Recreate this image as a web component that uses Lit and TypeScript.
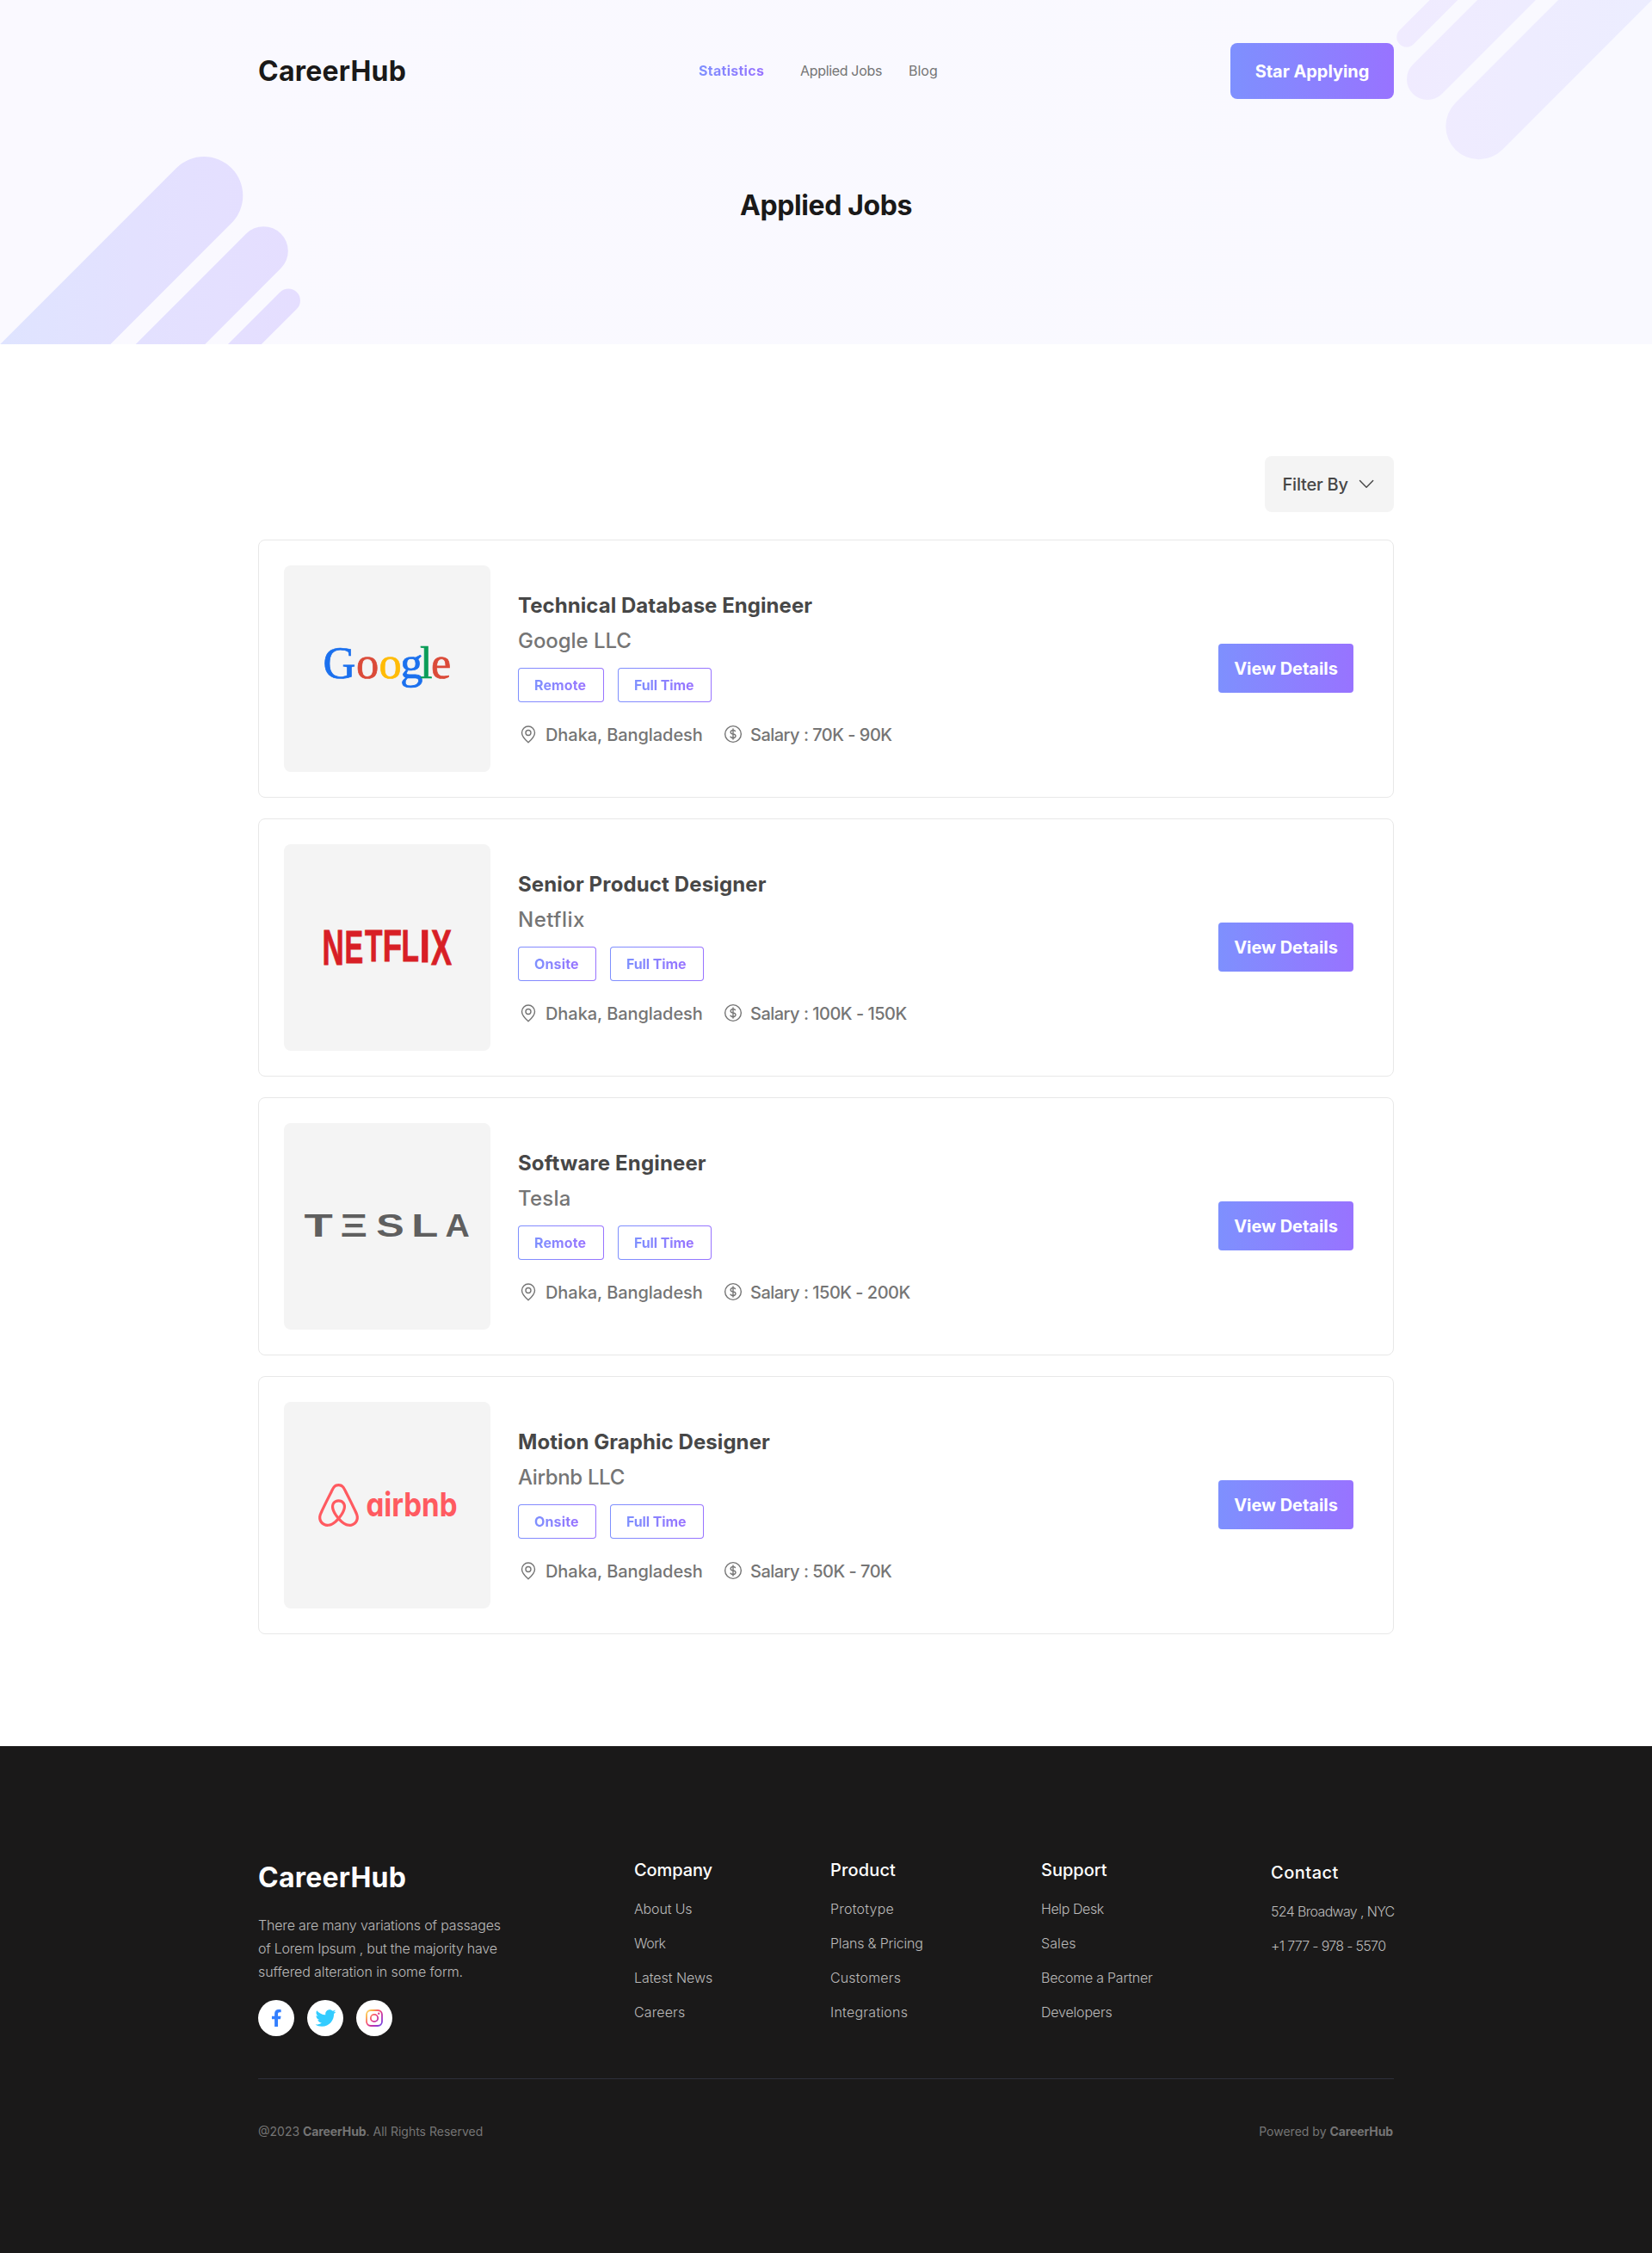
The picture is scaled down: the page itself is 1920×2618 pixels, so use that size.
import { LitElement, html, css, svg } from "lit";
import { customElement, property } from "lit/decorators.js";

interface Tracked {
  text: string;
  ls: number;
}

interface Job {
  title: Tracked;
  company: Tracked;
  place: "Remote" | "Onsite";
  salary: string;
  logo: "google" | "netflix" | "tesla" | "airbnb";
}

const JOBS: Job[] = [
  {
    title: { text: "Technical Database Engineer", ls: 0.05 },
    company: { text: "Google LLC", ls: -0.05 },
    place: "Remote",
    salary: "Salary : 70K - 90K",
    logo: "google",
  },
  {
    title: { text: "Senior Product Designer", ls: 0.14 },
    company: { text: "Netflix", ls: 0.5 },
    place: "Onsite",
    salary: "Salary : 100K - 150K",
    logo: "netflix",
  },
  {
    title: { text: "Software Engineer", ls: 0.15 },
    company: { text: "Tesla", ls: 0.2 },
    place: "Remote",
    salary: "Salary : 150K - 200K",
    logo: "tesla",
  },
  {
    title: { text: "Motion Graphic Designer", ls: 0.07 },
    company: { text: "Airbnb LLC", ls: -0.35 },
    place: "Onsite",
    salary: "Salary : 50K - 70K",
    logo: "airbnb",
  },
];

const COLUMNS: { name: string; heading: Tracked; links: Tracked[] }[] = [
  {
    name: "company",
    heading: { text: "Company", ls: -0.1 },
    links: [
      { text: "About Us", ls: -0.15 },
      { text: "Work", ls: -0.5 },
      { text: "Latest News", ls: -0.04 },
      { text: "Careers", ls: 0.13 },
    ],
  },
  {
    name: "product",
    heading: { text: "Product", ls: 0.15 },
    links: [
      { text: "Prototype", ls: 0.22 },
      { text: "Plans & Pricing", ls: -0.2 },
      { text: "Customers", ls: 0.15 },
      { text: "Integrations", ls: 0.24 },
    ],
  },
  {
    name: "support",
    heading: { text: "Support", ls: 0 },
    links: [
      { text: "Help Desk", ls: -0.4 },
      { text: "Sales", ls: 0.1 },
      { text: "Become a Partner", ls: -0.23 },
      { text: "Developers", ls: -0.19 },
    ],
  },
  {
    name: "contact",
    heading: { text: "Contact", ls: 0.5 },
    links: [
      { text: "524 Broadway , NYC", ls: -0.66 },
      { text: "+1 777 - 978 - 5570", ls: -0.7 },
    ],
  },
];

const spaced = (t: Tracked) => html`<span style="letter-spacing:${t.ls}px">${t.text}</span>`;

/* Brand marks, each on the 240 x 240 tile of a job card. */

const googleLetters: [string, number, string][] = [
  ["G", 45.6, "#1b70ee"],
  ["o", 84, "#db4a38"],
  ["o", 110.6, "#ffbb06"],
  ["g", 135.2, "#1b70ee"],
  ["l", 158, "#0b9d58"],
  ["e", 171, "#db4a38"],
];

const netflixLetters: [string, number, number, number, number][] = [
  ["N", 44.4, 139.9, 0.7, 1.15],
  ["E", 70.4, 137.9, 0.65, 1.09],
  ["T", 93.9, 136.1, 0.67, 1.03],
  ["F", 114.7, 135.5, 0.73, 1.02],
  ["L", 136.4, 136.1, 0.67, 1.04],
  ["I", 157.5, 137.1, 0.9, 1.06],
  ["X", 171, 140.1, 0.72, 1.16],
];

const teslaLetters: [string, number, number][] = [
  ["T", 23.5, 1.5],
  ["Ξ", 65.5, 1.35],
  ["S", 107.3, 1.34],
  ["L", 148.2, 1.4],
  ["A", 187.5, 1.08],
];

const BELO =
  "M12.001 18.275c-1.353-1.697-2.148-3.184-2.413-4.457-.263-1.027-.16-1.848.291-2.465.477-.71 1.188-1.056 2.121-1.056s1.643.345 2.12 1.063c.446.61.558 1.432.286 2.465-.291 1.298-1.085 2.785-2.412 4.458zm9.601 1.14c-.185 1.246-1.034 2.28-2.2 2.783-2.253.98-4.483-.583-6.392-2.704 3.157-3.951 3.74-7.028 2.385-9.018-.795-1.14-1.933-1.695-3.394-1.695-2.944 0-4.563 2.49-3.927 5.382.37 1.565 1.352 3.343 2.917 5.332-.98 1.085-1.91 1.856-2.732 2.333-.636.344-1.245.558-1.828.609-2.679.399-4.778-2.2-3.825-4.88.132-.345.395-.98.845-1.961l.025-.053c1.464-3.178 3.242-6.79 5.285-10.795l.053-.132.58-1.116c.45-.822.635-1.19 1.351-1.643.346-.21.77-.315 1.246-.315.954 0 1.698.558 2.016 1.007.158.239.345.557.582.953l.558 1.089.08.159c2.041 4.004 3.821 7.608 5.279 10.794l.026.025.533 1.22.318.764c.243.613.294 1.222.213 1.858zm1.22-2.39c-.186-.583-.505-1.271-.9-2.094v-.03c-1.889-4.006-3.642-7.608-5.307-10.844l-.111-.163C15.317 1.461 14.468 0 12.001 0c-2.44 0-3.476 1.695-4.535 3.898l-.081.16c-1.669 3.236-3.421 6.843-5.303 10.847v.053l-.559 1.22c-.21.504-.317.768-.345.847C-.172 20.74 2.611 24 5.98 24c.027 0 .132 0 .265-.027h.372c1.75-.213 3.554-1.325 5.384-3.317 1.829 1.989 3.635 3.104 5.382 3.317h.372c.133.027.239.027.265.027 3.37.003 6.152-3.261 4.802-6.975z";

const LOGOS = {
  google: svg`<g font-family="Liberation Serif, serif" font-size="52.5">${googleLetters.map(
    ([c, x, fill]) => svg`<text x=${x} y="131.3" fill=${fill} stroke=${fill} stroke-width="0.7">${c}</text>`
  )}</g>`,
  netflix: svg`<g font-family="Liberation Sans, sans-serif" font-size="50" font-weight="700" fill="#d81f26" stroke="#d81f26" stroke-width="0.8">${netflixLetters.map(
    ([c, x, y, sx, sy]) => svg`<text transform="translate(${x} ${y}) scale(${sx} ${sy})">${c}</text>`
  )}</g>`,
  tesla: svg`<g font-family="Liberation Sans, sans-serif" font-size="36.3" font-weight="700" fill="#5f5f5f">${teslaLetters.map(
    ([c, x, sx]) => svg`<text transform="translate(${x} 132.3) scale(${sx} 1)">${c}</text>`
  )}</g>`,
  airbnb: svg`<g fill="#ff5a60">
    <path transform="translate(38.3 95) scale(2.1 2.08)" d=${BELO}></path>
    <text class="airbnb" x="95.5" y="133" textLength="106" lengthAdjust="spacingAndGlyphs">airbnb</text></g>`,
};

@customElement("job-card")
export class JobCard extends LitElement {
  @property({ attribute: false }) job!: Job;

  static styles = css`
    :host {
      display: block;
    }
    .card {
      box-sizing: border-box;
      height: 300px;
      border: 1px solid #e8e8e8;
      border-radius: 8px;
      padding: 0 46px 0 29px;
      display: flex;
      align-items: center;
    }
    .tile {
      width: 240px;
      height: 240px;
      border-radius: 8px;
      background: #f4f4f4;
      flex: none;
    }
    .tile svg {
      display: block;
    }
    .airbnb {
      font: 700 38px Inter, sans-serif;
      font-feature-settings: "cv11";
    }
    .info {
      margin-left: 32px;
      flex: 1;
      white-space: nowrap;
    }
    h2 {
      margin: 0 0 8px;
      font-size: 24px;
      line-height: 33px;
      font-weight: 700;
      color: #474747;
    }
    .company {
      margin: 0 0 15px;
      font-size: 24px;
      line-height: 33px;
      font-weight: 450;
      color: #757575;
    }
    .tags {
      display: flex;
      gap: 16px;
      margin-bottom: 24px;
    }
    .tag {
      box-sizing: border-box;
      height: 40px;
      border: 1px solid transparent;
      border-radius: 4px;
      background: linear-gradient(#fff, #fff) padding-box,
        linear-gradient(90deg, #7e90fe, #9873ff) border-box;
      display: flex;
      align-items: center;
      padding-left: 18px;
      font-size: 16px;
      font-weight: 700;
    }
    .tag span {
      background: linear-gradient(90deg, #7e90fe, #9873ff);
      background-clip: text;
      -webkit-background-clip: text;
      color: transparent;
    }
    .remote {
      width: 100px;
      letter-spacing: 0.1px;
    }
    .onsite {
      width: 91px;
      letter-spacing: 0.15px;
    }
    .full {
      width: 109px;
      letter-spacing: -0.12px;
    }
    .facts {
      display: flex;
      height: 27px;
      font-size: 20px;
      line-height: 27px;
      font-weight: 450;
      color: #757575;
    }
    .fact {
      display: flex;
      align-items: center;
      gap: 8px;
    }
    .fact span {
      padding-top: 1px;
    }
    .place {
      width: 238px;
      letter-spacing: -0.06px;
    }
    .salary {
      letter-spacing: -0.52px;
    }
    .fact svg {
      flex: none;
      margin-top: -1px;
    }
    .view {
      width: 157px;
      height: 57px;
      margin-top: -1px;
      border-radius: 4px;
      background: linear-gradient(90deg, #7e90fe, #9873ff);
      color: #fff;
      font-size: 20px;
      font-weight: 700;
      letter-spacing: -0.05px;
      display: flex;
      align-items: center;
      justify-content: center;
    }
  `;

  render() {
    const j = this.job;
    return html`<article class="card">
      <div class="tile"><svg width="240" height="240" viewBox="0 0 240 240">${LOGOS[j.logo]}</svg></div>
      <div class="info">
        <h2>${spaced(j.title)}</h2>
        <div class="company">${spaced(j.company)}</div>
        <div class="tags">
          <div class="tag ${j.place.toLowerCase()}"><span>${j.place}</span></div>
          <div class="tag full"><span>Full Time</span></div>
        </div>
        <div class="facts">
          <div class="fact place">
            <svg width="24" height="24" viewBox="0 0 24 24" fill="none" stroke="#757575" stroke-width="1.4">
              <path d="M15 10.5a3 3 0 1 1-6 0 3 3 0 0 1 6 0Z"></path>
              <path d="M19.5 10.5c0 4.6-4.2 8.4-7.5 11.25C8.7 18.9 4.5 15.1 4.5 10.5a7.5 7.5 0 1 1 15 0Z"></path>
            </svg>
            <span>Dhaka, Bangladesh</span>
          </div>
          <div class="fact salary">
            <svg width="24" height="24" viewBox="0 0 24 24" fill="none" stroke="#757575" stroke-width="1.4" stroke-linecap="round">
              <circle cx="12" cy="12" r="9.35"></circle>
              <path d="M12 6v12m-3-2.818.879.659c1.171.879 3.07.879 4.242 0 1.172-.879 1.172-2.303 0-3.182C13.536 12.219 12.768 12 12 12c-.725 0-1.45-.22-2.003-.659-1.106-.879-1.106-2.303 0-3.182s2.9-.879 4.006 0l.415.33"></path>
            </svg>
            <span>${j.salary}</span>
          </div>
        </div>
      </div>
      <div class="view">View Details</div>
    </article>`;
  }
}

@customElement("app-root")
export class AppRoot extends LitElement {
  static styles = css`
    :host {
      display: block;
      width: 1920px;
      background: #fff;
      font-family: Inter, "Open Sans", sans-serif;
    }
    .wrap {
      width: 1320px;
      margin: 0 auto;
    }
    .hero {
      position: relative;
      height: 400px;
      overflow: hidden;
      background: linear-gradient(90deg, #faf9ff, #f9f9ff);
    }
    .stripes {
      position: absolute;
      inset: 0;
    }
    .bar {
      position: relative;
      padding-top: 50px;
      display: grid;
      grid-template-columns: 512px 1fr 190px;
      align-items: center;
      white-space: nowrap;
    }
    .brand {
      font-size: 32px;
      line-height: 44px;
      font-weight: 700;
      letter-spacing: 0.21px;
      color: #1a1919;
    }
    nav {
      display: grid;
      grid-template-columns: 118px 126px auto;
      margin-top: -1px;
      font-size: 16px;
      font-weight: 400;
      color: #757575;
    }
    .active {
      justify-self: start;
      font-weight: 700;
      letter-spacing: 0.27px;
      background: linear-gradient(90deg, #7e90fe, #9873ff);
      background-clip: text;
      -webkit-background-clip: text;
      color: transparent;
    }
    .applied {
      letter-spacing: -0.33px;
    }
    .start {
      height: 65px;
      border-radius: 8px;
      background: linear-gradient(90deg, #7e90fe, #9873ff);
      color: #fff;
      font-size: 20px;
      font-weight: 700;
      letter-spacing: -0.05px;
      display: flex;
      align-items: center;
      justify-content: center;
    }
    h1 {
      position: relative;
      margin: 102px 0 0;
      text-align: center;
      font-size: 32px;
      line-height: 44px;
      font-weight: 700;
      letter-spacing: -0.4px;
      color: #1a1919;
    }
    main {
      padding: 130px 0;
      display: flex;
      flex-direction: column;
      gap: 24px;
    }
    .filter {
      align-self: flex-end;
      box-sizing: border-box;
      width: 150px;
      height: 65px;
      margin-bottom: 8px;
      padding-left: 20.5px;
      border-radius: 8px;
      background: #f4f4f4;
      color: #474747;
      font-size: 20px;
      font-weight: 500;
      letter-spacing: -0.22px;
      display: flex;
      align-items: center;
    }
    .filter svg {
      margin-left: 9.5px;
    }
    footer {
      background: #1a1919;
      height: 589px;
      box-sizing: border-box;
      padding-top: 130px;
      color: #fff;
      white-space: nowrap;
    }
    .top {
      display: grid;
      grid-template-columns: 437px 228px 245px 267px auto;
      height: 256px;
      align-items: start;
    }
    .foot-brand {
      color: #fff;
      padding-top: 1px;
    }
    .about {
      margin: 20px 0 19px;
      font-size: 16px;
      line-height: 27px;
      font-weight: 300;
      color: #bababa;
    }
    .about div:nth-child(1) {
      letter-spacing: -0.17px;
    }
    .about div:nth-child(2) {
      letter-spacing: -0.23px;
    }
    .about div:nth-child(3) {
      letter-spacing: -0.1px;
    }
    .social {
      display: flex;
      gap: 15px;
    }
    .social svg {
      display: block;
    }
    .contact {
      padding-top: 3px;
    }
    h3 {
      margin: 0 0 20px;
      padding-top: 1px;
      font-size: 20px;
      line-height: 27px;
      font-weight: 500;
    }
    .links {
      display: flex;
      flex-direction: column;
      gap: 18px;
      font-size: 16px;
      line-height: 22px;
      font-weight: 300;
      color: #bababa;
    }
    .legal {
      border-top: 1px solid #2e2f3b;
      padding-top: 51px;
      display: flex;
      justify-content: space-between;
      font-size: 14px;
      line-height: 20px;
      color: #757575;
    }
    .legal div:last-child {
      padding-right: 1px;
    }
    b {
      font-weight: 700;
      letter-spacing: -0.1px;
    }
  `;

  private stripes() {
    return html`<svg class="stripes" width="1920" height="400" viewBox="0 0 1920 400" fill="none" stroke-linecap="round">
      <defs>
        <linearGradient id="left" gradientUnits="userSpaceOnUse" x1="0" y1="0" x2="350" y2="0">
          <stop stop-color="#dfe4ff"></stop>
          <stop offset=".45" stop-color="#e3e1ff"></stop>
          <stop offset="1" stop-color="#e5deff"></stop>
        </linearGradient>
        <linearGradient id="right" gradientUnits="userSpaceOnUse" x1="1623" y1="0" x2="1920" y2="0">
          <stop stop-color="#f0ebff"></stop>
          <stop offset="1" stop-color="#ecedff"></stop>
        </linearGradient>
      </defs>
      <g stroke="url(#left)">
        <path stroke-width="90.6" d="M237 227.3 4.3 460"></path>
        <path stroke-width="57" d="M306.3 291.7 138 460"></path>
        <path stroke-width="27.5" d="M335.2 349.2 224.4 460"></path>
      </g>
      <g stroke="url(#right)">
        <path stroke-width="23" d="M1634.8 43.2 1738-60"></path>
        <path stroke-width="48" d="M1659 92 1811-60"></path>
        <path stroke-width="77" d="M1718.8 146.7 1925.5-60"></path>
      </g>
    </svg>`;
  }

  private social() {
    return html`<div class="social">
      <svg width="42" height="42" viewBox="0 0 42 42">
        <circle cx="21" cy="21" r="21" fill="#fff"></circle>
        <svg x="15" y="11" width="12.6" height="20" viewBox="0 0 320 512">
          <path fill="#337fff" d="M279.14 288l14.22-92.66h-88.91v-60.13c0-25.35 12.42-50.06 52.24-50.06h40.42V6.26S260.43 0 225.36 0c-73.22 0-121.08 44.38-121.08 124.72v70.62H22.89V288h81.39v224h100.17V288z"></path>
        </svg>
      </svg>
      <svg width="42" height="42" viewBox="0 0 42 42">
        <circle cx="21" cy="21" r="21" fill="#fff"></circle>
        <svg x="9.5" y="9" width="24" height="24" viewBox="0 0 512 512">
          <path fill="#33ccff" d="M459.37 151.716c.325 4.548.325 9.097.325 13.645 0 138.72-105.583 298.558-298.558 298.558-59.452 0-114.68-17.219-161.137-47.106 8.447.974 16.568 1.299 25.34 1.299 49.055 0 94.213-16.568 130.274-44.832-46.132-.975-84.792-31.188-98.112-72.772 6.498.974 12.995 1.624 19.818 1.624 9.421 0 18.843-1.3 27.614-3.573-48.081-9.747-84.143-51.98-84.143-102.985v-1.299c13.969 7.797 30.214 12.67 47.431 13.319-28.264-18.843-46.781-51.005-46.781-87.391 0-19.492 5.197-37.36 14.294-52.954 51.655 63.675 129.3 105.258 216.365 109.807-1.624-7.797-2.599-15.918-2.599-24.04 0-57.828 46.782-104.934 104.934-104.934 30.213 0 57.502 12.67 76.67 33.137 23.715-4.548 46.456-13.32 66.599-25.34-7.798 24.366-24.366 44.833-46.132 57.827 21.117-2.273 41.584-8.122 60.426-16.243-14.292 20.791-32.161 39.308-52.628 54.253z"></path>
        </svg>
      </svg>
      <svg width="42" height="42" viewBox="0 0 42 42">
        <defs>
          <linearGradient id="insta" gradientUnits="userSpaceOnUse" x1="12" y1="12" x2="31" y2="30">
            <stop stop-color="#fbd86f"></stop>
            <stop offset=".2" stop-color="#fcae45"></stop>
            <stop offset=".4" stop-color="#f75274"></stop>
            <stop offset=".56" stop-color="#d53692"></stop>
            <stop offset=".78" stop-color="#a138c8"></stop>
            <stop offset="1" stop-color="#5b4fe9"></stop>
          </linearGradient>
        </defs>
        <circle cx="21" cy="21" r="21" fill="#fff"></circle>
        <g fill="none" stroke="url(#insta)" stroke-width="1.8">
          <rect x="12" y="12" width="18" height="18" rx="5"></rect>
          <circle cx="21" cy="21" r="4.2"></circle>
        </g>
        <circle cx="26.2" cy="15.8" r="1.2" fill="url(#insta)"></circle>
      </svg>
    </div>`;
  }

  render() {
    return html`
      <header class="hero">
        ${this.stripes()}
        <div class="wrap bar">
          <div class="brand">CareerHub</div>
          <nav>
            <span class="active">Statistics</span>
            <span class="applied">Applied Jobs</span>
            <span>Blog</span>
          </nav>
          <div class="start">Star Applying</div>
        </div>
        <h1>Applied Jobs</h1>
      </header>
      <main class="wrap">
        <div class="filter">
          Filter By
          <svg width="24" height="24" viewBox="0 0 24 24" fill="none" stroke="#474747" stroke-width="1.4" stroke-linecap="round" stroke-linejoin="round">
            <path d="m4.5 7.5 7.6 7.8 7.6-7.8"></path>
          </svg>
        </div>
        ${JOBS.map((job) => html`<job-card .job=${job}></job-card>`)}
      </main>
      <footer>
        <div class="wrap top">
          <div>
            <div class="brand foot-brand">CareerHub</div>
            <div class="about">
              <div>There are many variations of passages</div>
              <div>of Lorem Ipsum , but the majority have</div>
              <div>suffered alteration in some form.</div>
            </div>
            ${this.social()}
          </div>
          ${COLUMNS.map(
            (c) => html`<div class=${c.name}>
              <h3>${spaced(c.heading)}</h3>
              <div class="links">${c.links.map((l) => html`<div>${spaced(l)}</div>`)}</div>
            </div>`
          )}
        </div>
        <div class="wrap legal">
          <div>@2023 <b>CareerHub</b>. All Rights Reserved</div>
          <div>Powered by <b>CareerHub</b></div>
        </div>
      </footer>
    `;
  }
}
